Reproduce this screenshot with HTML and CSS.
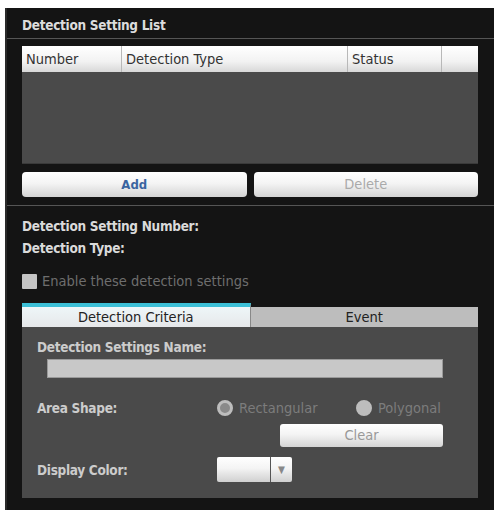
FILE: index.html
```html
<!DOCTYPE html>
<html>
<head>
<meta charset="utf-8">
<link rel="stylesheet" href="styles.css">
</head>
<body>
<div class="panel">
  <div class="title">Detection Setting List</div>
  <div class="list-section">
    <div class="table">
      <div class="thead">
        <div class="th c-num">Number</div>
        <div class="th c-type">Detection Type</div>
        <div class="th c-status">Status</div>
        <div class="th c-extra"></div>
      </div>
      <div class="tbody"></div>
    </div>
    <div class="btn-row">
      <div class="btn btn-add">Add</div>
      <div class="btn btn-disabled">Delete</div>
    </div>
  </div>
  <div class="detail-section">
    <div class="label">Detection Setting Number:</div>
    <div class="label">Detection Type:</div>
    <div class="check-row"><span class="checkbox"></span><span class="check-text">Enable these detection settings</span></div>
    <div class="tabs">
      <div class="tab tab-active">Detection Criteria</div>
      <div class="tab">Event</div>
    </div>
    <div class="tab-body">
      <div class="sub-label">Detection Settings Name:</div>
      <div class="text-input"></div>
      <div class="shape-row">
        <div class="sub-label shape-label">Area Shape:</div>
        <div class="radio-opt opt-rect"><span class="radio selected"></span><span class="radio-text">Rectangular</span></div>
        <div class="radio-opt opt-poly"><span class="radio"></span><span class="radio-text">Polygonal</span></div>
      </div>
      <div class="clear-row"><div class="btn btn-clear">Clear</div></div>
      <div class="color-row">
        <div class="sub-label color-label">Display Color:</div>
        <div class="select"><span class="select-val"></span><span class="select-arrow">&#9660;</span></div>
      </div>
    </div>
  </div>
</div>
</body>
</html>
```

FILE: styles.css
```css
html, body {
  margin: 0;
  padding: 0;
  background: #ffffff;
}
body {
  font-family: "DejaVu Sans Condensed", "DejaVu Sans", sans-serif;
  font-size: 14.5px;
}
.panel {
  margin: 8px 0 0 5px;
  width: 489px;
  height: 502px;
  background: #141414;
  box-sizing: border-box;
  border-left: 2px solid #2a2a2a;
}
.title {
  height: 31px;
  line-height: 34px;
  padding-left: 15px;
  color: #dcdcdc;
  border-bottom: 1px solid #555;
  box-sizing: border-box;
  font-size: 13.5px;
  font-weight: bold;
  letter-spacing: -0.3px;
}
.list-section {
  padding: 7px 14px 0 15px;
  height: 167px;
  box-sizing: border-box;
  border-bottom: 1px solid #555;
}
.table {
  width: 456px;
  background: #4a4a4a;
}
.thead {
  display: flex;
  height: 26px;
  background: linear-gradient(#ffffff, #f2f2f2 60%, #d8d8d8);
}
.th {
  line-height: 27px;
  color: #333;
  padding-left: 4px;
  box-sizing: border-box;
  border-right: 1px solid #b8b8b8;
  font-size: 14.5px;
}
.c-num { width: 100px; }
.c-type { width: 226px; }
.c-status { width: 94px; }
.c-extra { flex: 1; border-right: none; }
.tbody {
  height: 91px;
  border-bottom: 1px solid #3a3a3a;
}
.btn-row {
  display: flex;
  gap: 7px;
  margin-top: 8px;
  width: 456px;
}
.btn {
  flex: 1;
  height: 25px;
  line-height: 25px;
  text-align: center;
  border-radius: 4px;
  background: linear-gradient(#ffffff, #f4f4f4 45%, #d4d4d4);
  font-size: 14.5px;
}
.btn-add {
  color: #3a64a0;
  font-weight: bold;
  font-size: 13px;
}
.btn-disabled {
  color: #aaa;
}
.detail-section {
  padding: 9px 16px 0 15px;
}
.label {
  color: #dadada;
  height: 22px;
  line-height: 22px;
  font-size: 13.5px;
  font-weight: bold;
  letter-spacing: -0.3px;
}
.check-row {
  display: flex;
  align-items: center;
  gap: 5px;
  height: 22px;
  margin-top: 11px;
}
.checkbox {
  width: 15px;
  height: 15px;
  background: #c4c4c4;
  border-radius: 1px;
}
.check-text {
  color: #6e6e6e;
}
.tabs {
  display: flex;
  width: 456px;
  margin-top: 11px;
  height: 24px;
}
.tab {
  flex: 1;
  text-align: center;
  background: #bdbdbd;
  color: #222;
  margin-top: 4px;
  line-height: 20px;
  font-size: 14.5px;
}
.tab-active {
  margin-top: 0;
  border-top: 4px solid #3bbfd6;
  background: linear-gradient(#eef6f8, #e6e8ea);
  border-right: 1px solid #888;
}
.tab-body {
  width: 456px;
  height: 171px;
  background: #4a4a4a;
  box-sizing: border-box;
  padding: 11px 35px 0 15px;
}
.sub-label {
  color: #cccccc;
  font-size: 13.5px;
  font-weight: bold;
  letter-spacing: -0.3px;
  height: 18px;
  line-height: 18px;
}
.text-input {
  margin: 3px 0 0 10px;
  height: 19px;
  background: #c8c8c8;
  border: 1px solid #9a9a9a;
  box-sizing: border-box;
}
.shape-row {
  display: flex;
  align-items: center;
  margin-top: 21px;
  height: 18px;
}
.shape-label {
  width: 180px;
}
.radio-opt {
  display: flex;
  align-items: center;
  gap: 6px;
}
.opt-rect {
  width: 139px;
}
.radio {
  width: 10px;
  height: 10px;
  border-radius: 50%;
  border: 3px solid #bdbdbd;
  background: #bdbdbd;
}
.radio.selected {
  background: #8a8a8a;
}
.radio-text {
  color: #7c7c7c;
  font-size: 14.5px;
}
.clear-row {
  display: flex;
  justify-content: flex-end;
  margin-top: 7px;
}
.btn-clear {
  flex: none;
  width: 163px;
  height: 23px;
  line-height: 23px;
  color: #999;
  border-radius: 3px;
}
.color-row {
  display: flex;
  align-items: center;
  margin-top: 10px;
}
.color-label {
  width: 180px;
}
.select {
  display: flex;
  width: 75px;
  height: 25px;
  border-radius: 2px;
  background: linear-gradient(#ffffff, #f4f4f4 45%, #d0d0d0);
}
.select-val {
  flex: 1;
  border-right: 1px solid #555;
}
.select-arrow {
  width: 21px;
  text-align: center;
  line-height: 25px;
  color: #888;
  font-size: 10px;
}
```
